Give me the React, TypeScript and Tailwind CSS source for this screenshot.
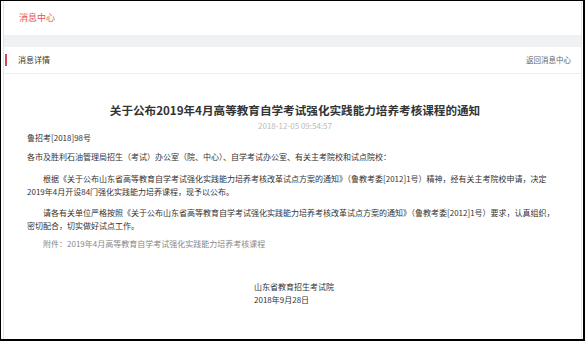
import React from "react";

const cjk = { fontFamily: '"Noto Sans CJK SC", "Microsoft YaHei", sans-serif' };

export default function App() {
  return (
    <div
      className="w-[585px] h-[341px] bg-white border-black border-t border-l border-r-2 border-b-2 box-border"
      style={cjk}
    >
      <div className="h-full ml-[2px] mr-[1px] border-l border-r border-[#e3e3e3] flex flex-col">
        <div className="h-[34px] flex items-center pl-[15px] text-[9px] text-[#e0545a]">消息中心</div>
        <div className="h-[12px] bg-[#f0f1f3]" />

        <div className="h-[27px] flex items-center justify-between border-b border-[#eeeeee] pr-[10px]">
          <div className="flex items-center">
            <span className="ml-[1px] w-[2px] h-[12px] bg-[#d4454c]" />
            <span className="ml-[11px] text-[8px] text-[#333]">消息详情</span>
          </div>
          <span className="text-[7.5px] text-[#666]">返回消息中心</span>
        </div>

        <div className="pl-[23px] pr-[18px] text-[8px] leading-[13px] text-[#333]">
          <h1 className="mt-[28px] text-center text-[11.6px] leading-[16px] font-bold text-[#333]">
            关于公布2019年4月高等教育自学考试强化实践能力培养考核课程的通知
          </h1>
          <div className="mt-[3px] text-center text-[8px] leading-[10px] text-[#bbbbbb]">2018-12-05 09:54:57</div>

          <p className="mt-0">鲁招考[2018]98号</p>
          <p className="mt-[6px]">各市及胜利石油管理局招生（考试）办公室（院、中心）、自学考试办公室、有关主考院校和试点院校：</p>
          <p className="mt-[9px] whitespace-nowrap">
            <span className="pl-[16px]">根据《关于公布山东省高等教育自学考试强化实践能力培养考核改革试点方案的通知》（鲁教考委[2012]1号）精神，经有关主考院校申请，决定</span>
            <br />
            2019年4月开设84门强化实践能力培养课程，现予以公布。
          </p>
          <p className="mt-[8px] whitespace-nowrap">
            <span className="pl-[16px]">请各有关单位严格按照《关于公布山东省高等教育自学考试强化实践能力培养考核改革试点方案的通知》（鲁教考委[2012]1号）要求，认真组织，</span>
            <br />
            密切配合，切实做好试点工作。
          </p>
          <p className="mt-[5px] pl-[16px] text-[#888]">附件：2019年4月高等教育自学考试强化实践能力培养考核课程</p>

          <div className="mt-[30px] pl-[227px]">
            <p>山东省教育招生考试院</p>
            <p>2018年9月28日</p>
          </div>
        </div>
      </div>
    </div>
  );
}
